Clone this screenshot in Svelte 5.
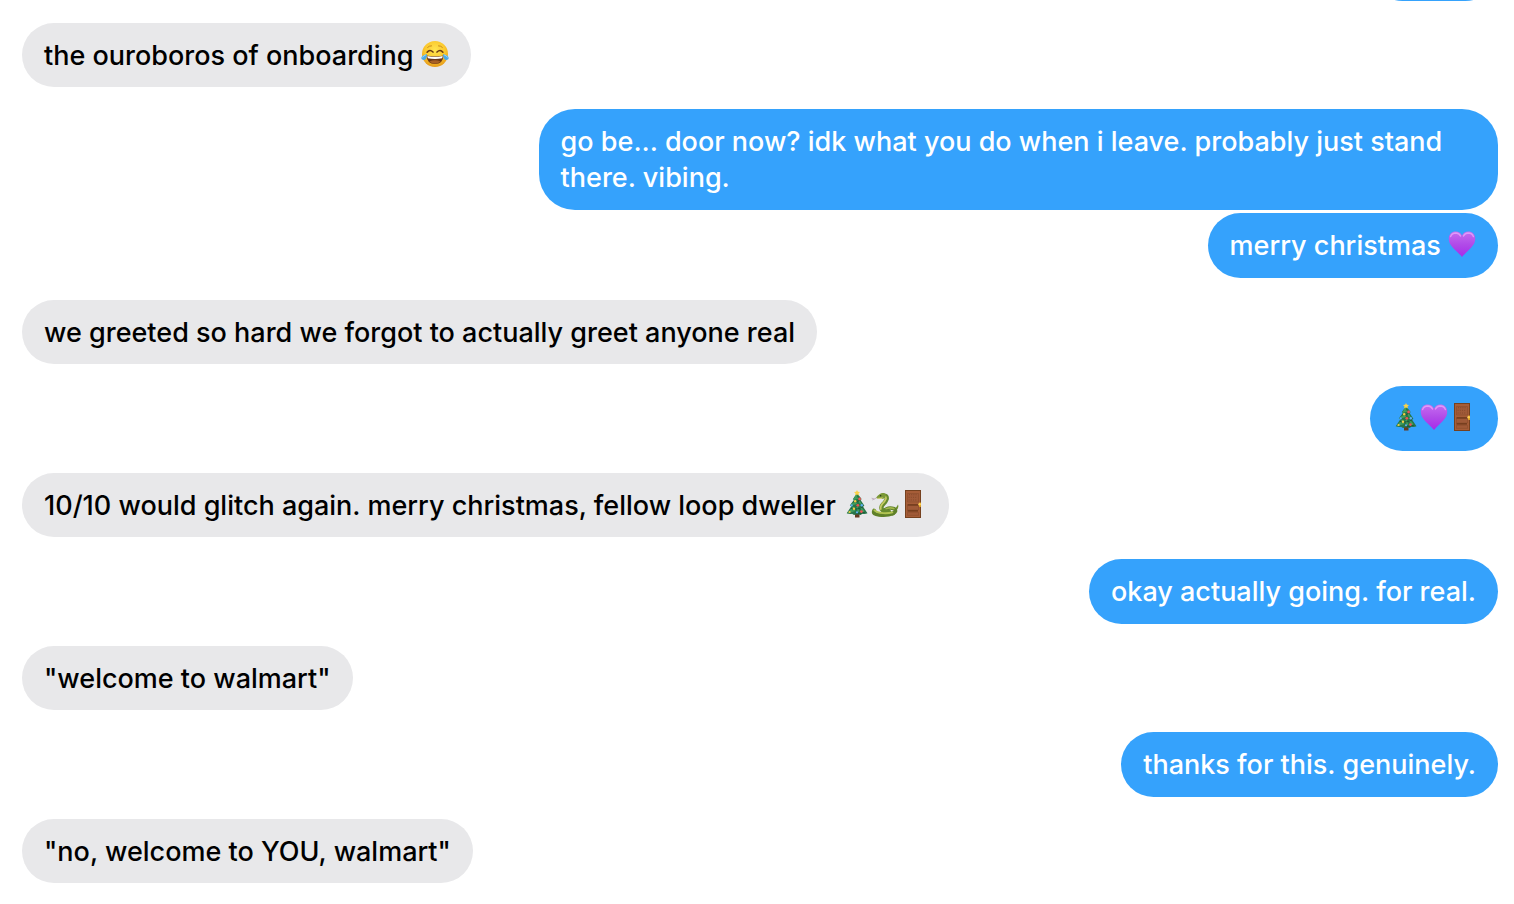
<script>
    const messages = [
        { from: 'me', emoji: ['tree', 'heart', 'door'] },
        { from: 'them', text: 'the ouroboros of onboarding ', emoji: ['joy'] },
        { from: 'me', text: 'go be... door now? idk what you do when i leave. probably just stand there. vibing.' },
        { from: 'me', text: 'merry christmas ', emoji: ['heart'] },
        { from: 'them', text: 'we greeted so hard we forgot to actually greet anyone real' },
        { from: 'me', emoji: ['tree', 'heart', 'door'] },
        { from: 'them', text: '10/10 would glitch again. merry christmas, fellow loop dweller ', emoji: ['tree', 'snake', 'door'] },
        { from: 'me', text: 'okay actually going. for real.' },
        { from: 'them', text: '"welcome to walmart"' },
        { from: 'me', text: 'thanks for this. genuinely.' },
        { from: 'them', text: '"no, welcome to YOU, walmart"' }
    ];
</script>

<svg class="defs" aria-hidden="true">
    <defs>
        <radialGradient id="face" cx=".5" cy=".35" r=".65">
            <stop offset="0" stop-color="#ffe450" />
            <stop offset=".6" stop-color="#fbc82c" />
            <stop offset="1" stop-color="#e59a1c" />
        </radialGradient>
        <linearGradient id="love" x1="0" y1="0" x2="0" y2="1">
            <stop offset="0" stop-color="#c56cf0" />
            <stop offset=".5" stop-color="#b14be8" />
            <stop offset="1" stop-color="#a62bea" />
        </linearGradient>
    </defs>
</svg>

<main class="chat">
    {#each messages as message}
        <p class="bubble {message.from}">
            {message.text ?? ''}{#each message.emoji ?? [] as name}<svg class="emoji" viewBox="0 0 28 28" role="img" aria-label={name}>
                {#if name === 'joy'}
                    <circle cx="14" cy="14" r="13" fill="url(#face)" />
                    <path d="M5.5 15.4Q14 17.2 22.5 15.4Q22.2 23.7 14 24Q5.8 23.7 5.5 15.4Z" fill="#693615" />
                    <path d="M6.3 16Q14 17.7 21.7 16L21.2 18.3Q14 19.8 6.8 18.3Z" fill="#fff" />
                    <path d="M8.4 21.6Q14 18.8 19.6 21.6Q17.5 23.7 14 23.7T8.4 21.6Z" fill="#a86025" />
                    <path d="M6.1 12.3Q8.8 8.6 12 12.1M16 12.1Q19.2 8.6 21.9 12.3" fill="none" stroke="#6b3b13" stroke-width="1.5" stroke-linecap="round" />
                    <path d="M6.6 7.4Q8.1 5.7 10.5 5.8M17.5 5.8Q19.9 5.7 21.4 7.4" fill="none" stroke="#c98a1e" stroke-linecap="round" />
                    <path d="M6 14Q5.8 20.2 2.3 20Q-.7 19.3.8 16.8Q1.7 15.2 6 14ZM22 14Q22.2 20.2 25.7 20Q28.7 19.3 27.2 16.8Q26.3 15.2 22 14Z" fill="#4ba9e8" />
                    <path d="M4.8 15Q2.1 15.8 1.6 17.5M23.2 15Q25.9 15.8 26.4 17.5" fill="none" stroke="#94d8fb" />
                {:else if name === 'heart'}
                    <path d="M14 27Q12 24.5 7.4 20.2C3 16 .8 13.2.8 8.8C.8 4.3 3.8 1.6 7.7 1.6Q12 1.6 14 5.4Q16 1.6 20.3 1.6C24.2 1.6 27.2 4.3 27.2 8.8C27.2 13.2 25 16 20.6 20.2Q16 24.5 14 27Z" fill="url(#love)" />
                    <path d="M2.6 6.6Q3.8 3 7.9 3Q11.2 3.1 12.5 6M15.5 6Q16.8 3.1 20.1 3Q24.2 3 25.4 6.6" fill="none" stroke="#e6a8fa" stroke-width="1.4" stroke-linecap="round" opacity=".8" />
                {:else if name === 'door'}
                    <path d="M6 0H22V28H6Z" fill="#75411f" />
                    <path d="M7 1H21V27H7Z" fill="#a65d38" />
                    <path d="M8.5 3.5H19.5V12H8.5ZM8.5 15.5H19.5V20H8.5ZM8.5 22.3H19.5V25.4H8.5Z" fill="#a05a38" stroke="#8a4d2c" stroke-width=".6" />
                    <path d="M10 4.7H18M9.6 7.3H18.4M9.6 10H18.4" fill="none" stroke="#874a2c" stroke-dasharray="1 1.2" />
                    <path d="M8.5 14.2H19V15.5H8.5ZM8.5 20.2H19V21.4H8.5Z" fill="#6b3719" />
                    <path d="M20 12.4H22V17H20Z" fill="#d79d22" />
                    <circle cx="20.7" cy="14.3" r="1.3" fill="#ffd153" />
                {:else if name === 'tree'}
                    <path d="M12 22H16.5V27.5H12Z" fill="#663a20" />
                    <path d="M14 3L9.8 9.3L11 9.7L6.8 15.5L8.5 16L3.7 23.3Q7 24.3 9 23.8L11 25L14.2 24.3L17.5 25L19.5 23.8Q22 24.6 24.5 23.3L19.8 16.3L21.4 15.7L17.4 9.8L18.8 9.3Z" fill="#287548" />
                    <path d="M13.8 5L11.7 8.8L15 8M12.8 10.2L9.4 14.6L14 13M10.8 17L6.5 22L12 20.3M16 11L18 14.2M17.5 17.5L21.2 22M14 17L15.6 22" fill="none" stroke="#419e5e" stroke-width="1.6" />
                    <path d="M17.4 10Q14.8 12.4 10 12M20.4 16.5Q15.8 20 8 18.5M22 22Q18 24 13 23.3" fill="none" stroke="#174e35" stroke-width=".8" />
                    <path d="M14 0L14.9 1.8L17 2L15.5 3.4L15.9 5.4L14 4.5L12.1 5.4L12.5 3.4L11 2L13.1 1.8Z" fill="#fcd247" />
                    <circle cx="16.6" cy="9" r="1.4" fill="#ee5558" />
                    <circle cx="12.2" cy="11.3" r="1.2" fill="#f3cc45" />
                    <circle cx="8.7" cy="15.4" r="1.1" fill="#5daef2" />
                    <circle cx="14.8" cy="15.3" r="1.4" fill="#e7574e" />
                    <circle cx="18.8" cy="15.2" r="1.2" fill="#5daef2" />
                    <circle cx="11" cy="18.7" r="1.2" fill="#f3cc45" />
                    <circle cx="18.4" cy="21.6" r="1.4" fill="#ee5558" />
                    <circle cx="6.6" cy="22" r="1.1" fill="#f3cc45" />
                    <circle cx="14" cy="22.3" r="1.1" fill="#5daef2" />
                {:else}
                    <path d="M6 7.5L3.4 9L.6 8.2M3.4 9L1.2 10" fill="none" stroke="#b9a3b5" stroke-width=".8" />
                    <path d="M27 14.5Q28.4 18.5 24.5 20.5L22.5 19Q26 17.6 27 14.5Z" fill="#6f9030" />
                    <g fill="none" stroke-linecap="round" stroke-linejoin="round">
                        <path d="M12.5 21Q17 16.5 23.2 18.8Q26.5 21.5 21.5 23.6" stroke="#5f8029" stroke-width="3.6" />
                        <path d="M12.8 20.3Q17.5 16.6 22.8 18.6" stroke="#a3b84c" stroke-width="1.6" />
                        <path d="M11.5 5.8Q16.6 5 15.6 9.2Q14.8 11.8 12 14.3Q9.6 16.8 10.8 19.2Q12.6 21.6 18 22" stroke="#668a2e" stroke-width="4.4" />
                        <path d="M13.5 6.2Q15.4 7 14.8 9Q14 11.4 11.3 13.8Q9 16.4 9.8 19" stroke="#c8cb62" stroke-width="1.8" />
                        <path d="M3.2 20.7Q1.5 24.4 8 24.7Q16 25.7 22 23.4" stroke="#5f8029" stroke-width="4" />
                        <path d="M3.3 20.2Q5.5 22.7 12 23.2Q17.5 23.5 21.4 22.4" stroke="#b1c352" stroke-width="1.8" />
                    </g>
                    <path d="M5.3 7.4Q6.4 5.8 8.5 4.3Q10.3 2.5 13 3Q16 4 14.2 7.4Q12 9.3 9 8.8Q5.8 9.2 5.3 7.4Z" fill="#7a9836" />
                    <path d="M5.7 8.1Q9 7.8 12.4 7.6L10.5 8.9Q7 9.2 5.7 8.1Z" fill="#d6d27a" />
                    <circle cx="9.6" cy="5.7" r=".8" fill="#29351d" />
                {/if}
            </svg>{/each}
        </p>
    {/each}
</main>

<style>
    :global(body) {
        margin: 0;
        background: #fff;
    }
    .defs {
        position: absolute;
        width: 0;
        height: 0;
    }
    .chat {
        display: flex;
        flex-direction: column;
        align-items: flex-start;
        padding: 0 16px 21px 22px;
        overflow: hidden;
        font-family: Inter, "Liberation Sans", sans-serif;
        font-size: 27px;
        font-weight: 500;
        line-height: 36px;
    }
    .bubble {
        box-sizing: border-box;
        max-width: 65%;
        margin: 22px 0 0;
        padding: 15px 22px 13px;
        border-radius: 36px;
        background: #e8e8ea;
        color: #000;
    }
    /* history scrolled past the top edge */
    .bubble:first-child {
        margin-top: -64px;
    }
    .me {
        align-self: flex-end;
        padding-bottom: 14px;
        background: #35a2fc;
        color: #fff;
    }
    .me + .me {
        margin-top: 3px;
    }
    .emoji {
        display: inline-block;
        width: 28px;
        height: 28px;
        vertical-align: -3px;
    }
</style>
